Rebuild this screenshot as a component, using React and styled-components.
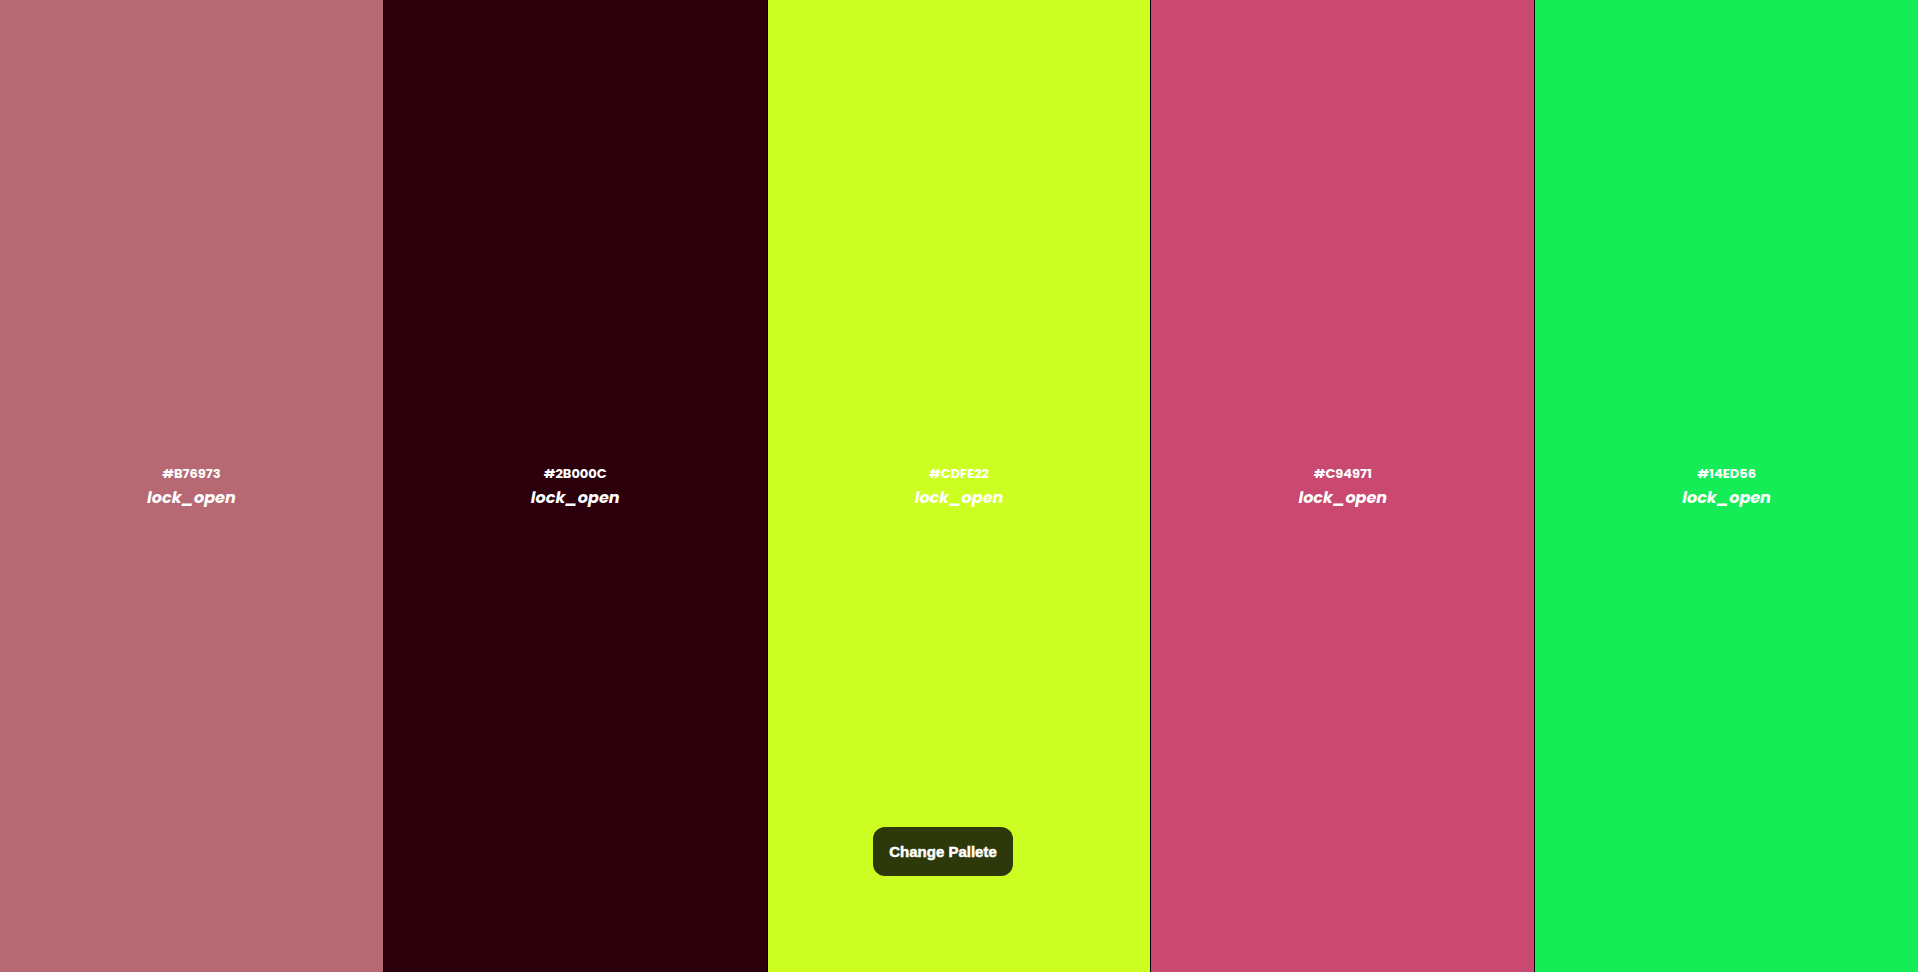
import React, { useState } from 'react';
import styled, { createGlobalStyle } from 'styled-components';

const initialColors = ['#B76973', '#2B000C', '#CDFE22', '#C94971', '#14ED56'];

const GlobalStyle = createGlobalStyle`
  html, body {
    margin: 0;
    padding: 0;
    height: 100%;
    overflow: hidden;
  }
  #root {
    height: 100%;
  }
`;

const App = () => {
  const [colors] = useState(initialColors);

  return (
    <Page>
      <GlobalStyle />
      {colors.map((color) => (
        <Column key={color} bg={color}>
          <Hex>{color}</Hex>
          <LockIcon>lock_open</LockIcon>
        </Column>
      ))}
      <ChangeButton>Change Pallete</ChangeButton>
    </Page>
  );
};

const Page = styled.div`
  position: relative;
  display: flex;
  width: 100vw;
  height: 100vh;
`;

const Column = styled.div`
  flex: 1;
  display: flex;
  flex-direction: column;
  justify-content: center;
  align-items: center;
  gap: 6px;
  padding-top: 2px;
  background-color: ${(p) => p.bg};
  border-left: 1px solid #000;
  color: #fff;
  font-family: Poppins, Inter, 'Open Sans', sans-serif;
  &:first-child {
    border-left: none;
  }
`;

const Hex = styled.div`
  font-size: 13px;
  font-weight: 700;
  line-height: 16px;
`;

const LockIcon = styled.div`
  font-size: 16px;
  font-weight: 700;
  font-style: italic;
  line-height: 20px;
  cursor: pointer;
`;

const ChangeButton = styled.button`
  position: absolute;
  left: 873px;
  top: 827px;
  width: 140px;
  height: 49px;
  border: none;
  outline: none;
  border-radius: 12px;
  background-color: #2d390b;
  color: #fff;
  font-family: 'Liberation Sans', Arial, sans-serif;
  font-size: 15px;
  font-weight: 700;
  -webkit-text-stroke: 0.5px #fff;
  cursor: pointer;
`;

export default App;
